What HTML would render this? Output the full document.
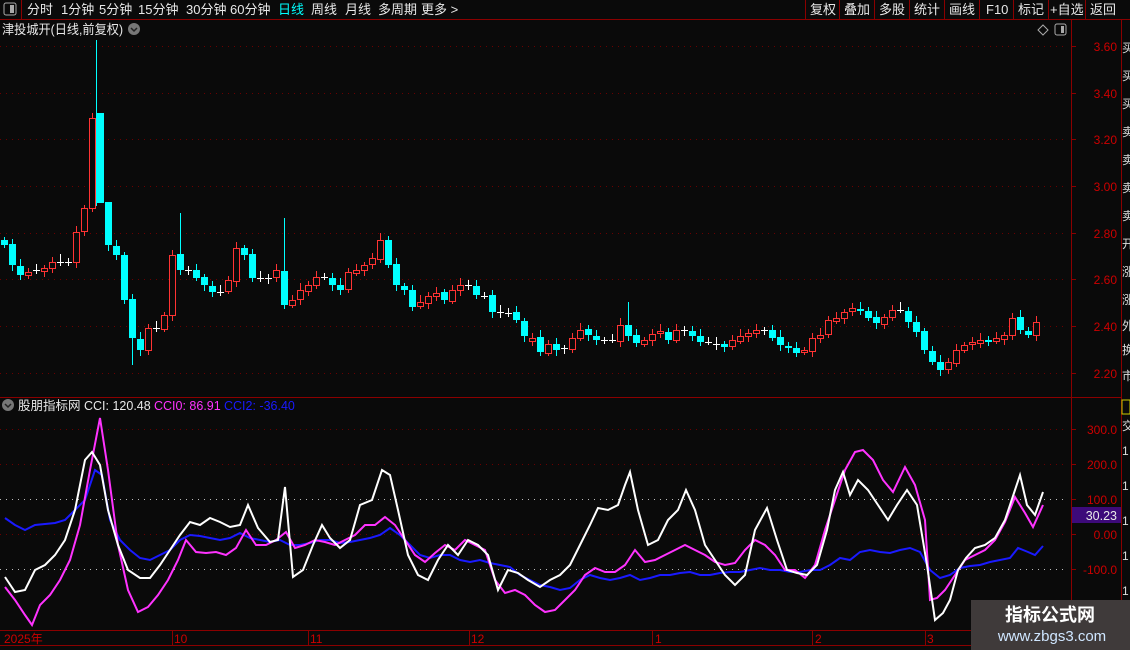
<!DOCTYPE html>
<html><head><meta charset="utf-8"><style>
body{margin:0;background:#0a0a0a;width:1130px;height:650px;overflow:hidden;font-family:"Liberation Sans","Noto Sans CJK SC",sans-serif;}
svg{position:absolute;left:0;top:0}
</style></head><body>
<svg id="s" width="1130" height="650" xmlns="http://www.w3.org/2000/svg" font-family="Liberation Sans, Noto Sans CJK SC, sans-serif">
<rect width="1130" height="650" fill="#0a0a0a"/>
<line x1="0" y1="19.5" x2="1130" y2="19.5" stroke="#8b0000"/>
<line x1="21.5" y1="0" x2="21.5" y2="19" stroke="#8b0000"/>
<rect x="4" y="3" width="12" height="12" rx="2" fill="none" stroke="#aaa"/><rect x="10" y="5" width="4" height="8" fill="#aaa"/>
<g fill="#e8e8e8" font-size="13">
<text x="27" y="14">分时</text><text x="61" y="14">1分钟</text><text x="99" y="14">5分钟</text><text x="138" y="14">15分钟</text><text x="186" y="14">30分钟</text><text x="230" y="14">60分钟</text>
<text x="278" y="14" fill="#00ffff">日线</text><text x="311" y="14">周线</text><text x="345" y="14">月线</text><text x="378" y="14">多周期</text><text x="421" y="14">更多 &gt;</text>
</g>
<g stroke="#8b0000"><line x1="805.5" y1="0" x2="805.5" y2="19"/><line x1="839.5" y1="0" x2="839.5" y2="19"/><line x1="874.5" y1="0" x2="874.5" y2="19"/><line x1="909.5" y1="0" x2="909.5" y2="19"/><line x1="944.5" y1="0" x2="944.5" y2="19"/><line x1="979.5" y1="0" x2="979.5" y2="19"/><line x1="1013.5" y1="0" x2="1013.5" y2="19"/><line x1="1048.5" y1="0" x2="1048.5" y2="19"/><line x1="1085.5" y1="0" x2="1085.5" y2="19"/></g>
<g fill="#e8e8e8" font-size="13"><text x="810" y="14">复权</text><text x="844" y="14">叠加</text><text x="879" y="14">多股</text><text x="914" y="14">统计</text><text x="949" y="14">画线</text><text x="986" y="14">F10</text><text x="1018" y="14">标记</text><text x="1050" y="14">+自选</text><text x="1090" y="14">返回</text></g>
<text x="2" y="34" fill="#e8e8e8" font-size="13" textLength="121" lengthAdjust="spacingAndGlyphs">津投城开(日线,前复权)</text>
<circle cx="134" cy="29" r="6" fill="#777"/><path d="M131 28l3 3 3-3" stroke="#222" stroke-width="1.5" fill="none"/>
<path d="M1043 25l5 5-5 5-5-5z" fill="none" stroke="#aaa"/>
<rect x="1055" y="24" width="11" height="11" rx="2" fill="none" stroke="#aaa"/><rect x="1061" y="26" width="3" height="7" fill="#aaa"/>
<line x1="1071.5" y1="20" x2="1071.5" y2="650" stroke="#8b0000"/>
<line x1="1121.5" y1="20" x2="1121.5" y2="650" stroke="#8b0000"/>
<line x1="0" y1="397.5" x2="1121" y2="397.5" stroke="#8b0000"/>
<line x1="0" y1="630.5" x2="971" y2="630.5" stroke="#8b0000"/>
<line x1="0" y1="645.5" x2="971" y2="645.5" stroke="#8b0000"/>
<g id="grid"></g>
<g id="cand"></g>
<g id="cci" fill="none" stroke-width="2"></g>
<circle cx="8" cy="405" r="6" fill="#777"/><path d="M5 404l3 3 3-3" stroke="#222" stroke-width="1.5" fill="none"/>
<text x="18" y="410" font-size="12.5" fill="#e8e8e8">股朋指标网</text>
<text x="84" y="410" font-size="12.5" fill="#e8e8e8">CCI: 120.48</text>
<text x="154" y="410" font-size="12.5" fill="#ff33ff">CCI0: 86.91</text>
<text x="224" y="410" font-size="12.5" fill="#1a1aff">CCI2: -36.40</text>
<rect x="1072" y="507" width="49" height="16" fill="#3d0a7a"/>
<text x="1117" y="520" font-size="12.5" fill="#e8e8e8" text-anchor="end">30.23</text>
<g fill="#cc0000" font-size="12"><text x="4" y="643">2025年</text><text x="174" y="643">10</text><text x="310" y="643">11</text><text x="471" y="643">12</text><text x="655" y="643">1</text><text x="815" y="643">2</text><text x="927" y="643">3</text></g>
<g stroke="#8b0000"><line x1="172.5" y1="630" x2="172.5" y2="646"/><line x1="308.5" y1="630" x2="308.5" y2="646"/><line x1="469.5" y1="630" x2="469.5" y2="646"/><line x1="652.5" y1="630" x2="652.5" y2="646"/><line x1="812.5" y1="630" x2="812.5" y2="646"/><line x1="925.5" y1="630" x2="925.5" y2="646"/></g>
<g fill="#ddd" font-size="12"><text x="1122" y="52">买</text><text x="1122" y="80">买</text><text x="1122" y="108">买</text><text x="1122" y="136">卖</text><text x="1122" y="164">卖</text><text x="1122" y="192">卖</text><text x="1122" y="220">卖</text><text x="1122" y="248">开</text><text x="1122" y="276">涨</text><text x="1122" y="304">涨</text><text x="1122" y="330">外</text><text x="1122" y="354">换</text><text x="1122" y="380">市</text>
<text x="1122" y="430">交</text><text x="1122" y="455">1</text><text x="1122" y="490">1</text><text x="1122" y="525">1</text><text x="1122" y="560">1</text><text x="1122" y="595">1</text></g>
<rect x="1122" y="400" width="8" height="14" fill="none" stroke="#cc0"/>
<rect x="971" y="600" width="159" height="50" fill="#3f3a3a"/>
<text x="1050" y="621" font-size="18" font-weight="bold" fill="#fff" text-anchor="middle">指标公式网</text>
<text x="1052" y="641" font-size="15" fill="#cfe6ff" text-anchor="middle">www.zbgs3.com</text>
</svg>
<script>
var NS="http://www.w3.org/2000/svg";
function el(p,t,a){var e=document.createElementNS(NS,t);for(var k in a)e.setAttribute(k,a[k]);p.appendChild(e);return e;}
var g=document.getElementById('grid');
var pl=[[46,'3.60'],[93,'3.40'],[139,'3.20'],[186,'3.00'],[233,'2.80'],[279,'2.60'],[326,'2.40'],[373,'2.20']];
pl.forEach(function(p){el(g,'line',{x1:0,y1:p[0]+.5,x2:1068,y2:p[0]+.5,stroke:'#6a0000','stroke-dasharray':'1 5'});
el(g,'line',{x1:1071,y1:p[0]+.5,x2:1076,y2:p[0]+.5,stroke:'#8b0000'});
var t=el(g,'text',{x:1117,y:p[0]+5,fill:'#cc0000','font-size':'12','text-anchor':'end'});t.textContent=p[1];});
var cl=[[429,'300.0'],[464,'200.0'],[499,'100.0'],[534,'0.00'],[569,'-100.0']];
cl.forEach(function(p){el(g,'line',{x1:0,y1:p[0]+.5,x2:1068,y2:p[0]+.5,stroke:(p[0]==499||p[0]==569)?'#bbb':'#6a0000','stroke-dasharray':'1 5'});
el(g,'line',{x1:1071,y1:p[0]+.5,x2:1076,y2:p[0]+.5,stroke:'#8b0000'});
var t=el(g,'text',{x:1117,y:p[0]+5,fill:'#cc0000','font-size':'12','text-anchor':'end'});t.textContent=p[1];});
var c=[245,265,275,272,270,268,262,262,262,232,208,118,203,245,255,300,338,350,328,328,315,255,270,270,278,285,292,292,280,248,255,278,278,278,270,305,300,290,285,277,277,285,290,272,270,265,258,240,265,285,290,307,302,296,293,300,290,285,285,295,296,312,312,313,320,336,338,352,344,350,348,338,330,335,340,340,340,325,336,343,340,334,331,340,330,330,336,342,342,344,347,340,336,333,330,330,338,345,348,353,350,338,335,320,318,312,308,311,318,323,317,310,310,322,332,350,362,370,362,350,345,342,340,342,338,335,318,330,335,322];
var cg=document.getElementById('cand');var prev=240;
for(var i=0;i<c.length;i++){var x=4+8*i,o=prev,cc=c[i];
 if(i==11){o=208;} if(i==12){o=113;}
 if(i%7==3&&Math.abs(o-cc)<3){o=cc+3;}
 var hi=Math.min(o,cc)-3-(i*7%5),lo=Math.max(o,cc)+3+(i*3%4);
 if(i==11)hi=113;if(i==12)hi=40;if(i==22)hi=213;if(i==35)hi=218;if(i==78)hi=302;if(i==130)hi=288;if(i==16)lo=365;if(i==13)hi=207;
 var up=cc<o,col=Math.abs(o-cc)<2?'#fff':(up?'#ff3333':'#00ffff');
 var xx=(i==12)?x-1:x;
 el(cg,'line',{x1:(i==12?x-4:x)+.5,y1:hi,x2:(i==12?x-4:x)+.5,y2:lo,stroke:col});
 var t=Math.min(o,cc),h=Math.max(Math.abs(o-cc),1);
 if(Math.abs(o-cc)<2)el(cg,'line',{x1:x-3,y1:cc+.5,x2:x+4,y2:cc+.5,stroke:col});
 else if(up)el(cg,'rect',{x:x-2.5,y:t+.5,width:6,height:h,fill:'#0a0a0a',stroke:col});
 else el(cg,'rect',{x:x-3,y:t,width:7,height:h,fill:col});
 prev=cc+((i*5)%3-1);}
var W=[5,577,15,592,25,590,35,570,45,565,55,555,65,540,75,510,85,460,92,452,100,465,108,510,118,545,128,570,140,578,150,578,160,565,170,550,180,535,190,522,200,525,210,518,220,522,230,527,240,525,248,505,258,528,270,542,278,540,285,487,293,577,303,570,313,545,322,525,330,538,340,548,350,540,360,505,372,500,382,470,390,475,398,510,408,555,418,575,428,580,438,560,448,545,458,555,468,540,478,545,488,555,498,590,508,570,518,573,528,580,540,587,550,580,560,575,570,565,580,545,590,525,598,508,608,510,618,505,625,485,630,472,638,510,648,545,658,540,668,520,678,510,686,490,695,510,705,545,715,560,725,575,735,585,745,575,755,530,767,508,777,540,787,570,797,573,807,575,817,565,827,530,835,490,843,472,850,495,858,480,868,490,878,505,888,520,897,505,907,490,917,505,927,565,935,620,943,613,950,600,958,570,966,558,975,548,985,545,995,538,1005,520,1015,490,1020,475,1027,505,1035,515,1043,492];
var M=[5,587,15,600,25,615,32,625,40,605,50,595,60,580,70,560,80,525,90,470,100,418,108,470,118,545,128,590,138,612,148,607,158,595,168,580,178,560,186,540,196,552,206,553,216,552,226,555,236,548,246,530,256,545,266,545,276,540,286,532,295,548,305,545,315,540,325,542,335,545,345,540,355,535,365,525,375,525,385,517,395,525,405,540,415,555,425,562,435,553,445,545,455,550,465,540,475,545,485,550,495,580,505,593,515,590,525,595,535,605,545,612,555,610,565,600,575,590,585,575,595,568,605,572,615,572,625,565,635,550,645,562,655,560,665,555,675,550,685,545,695,550,705,555,715,562,725,565,735,563,745,550,755,540,765,545,775,555,785,570,795,570,805,578,815,565,825,530,835,500,845,470,855,452,863,450,873,460,883,480,893,492,905,467,915,485,925,520,930,600,937,598,945,590,955,575,965,560,975,555,985,550,995,540,1005,522,1015,497,1025,513,1033,527,1043,505];
var B=[5,518,15,525,25,530,35,525,45,524,55,523,65,520,75,510,85,500,95,470,102,475,110,520,120,540,130,550,140,558,150,560,160,555,170,550,180,540,190,535,200,536,210,538,220,540,230,538,240,533,250,538,260,540,270,542,280,540,290,545,300,545,310,543,320,540,330,540,340,543,350,542,360,540,370,538,380,535,390,528,400,535,410,545,420,555,430,558,440,555,450,555,460,560,470,562,480,560,490,563,500,565,510,567,520,575,530,580,540,585,550,587,560,590,570,588,580,580,590,575,600,578,610,580,620,578,630,575,640,580,650,578,660,575,670,575,680,573,690,572,700,575,710,575,720,573,730,572,740,572,750,570,760,568,770,570,780,570,790,572,800,572,810,570,820,570,830,565,840,558,850,560,860,552,870,550,880,552,890,553,900,550,910,548,920,552,930,570,940,578,950,575,960,568,970,566,980,565,990,562,1000,560,1010,558,1018,548,1028,552,1035,555,1043,546];
var cg2=document.getElementById('cci');
[[B,'#1a1aff'],[M,'#ff33ff'],[W,'#ffffff']].forEach(function(a){el(cg2,'polyline',{points:a[0].join(' '),stroke:a[1]});});
</script>
</body></html>
